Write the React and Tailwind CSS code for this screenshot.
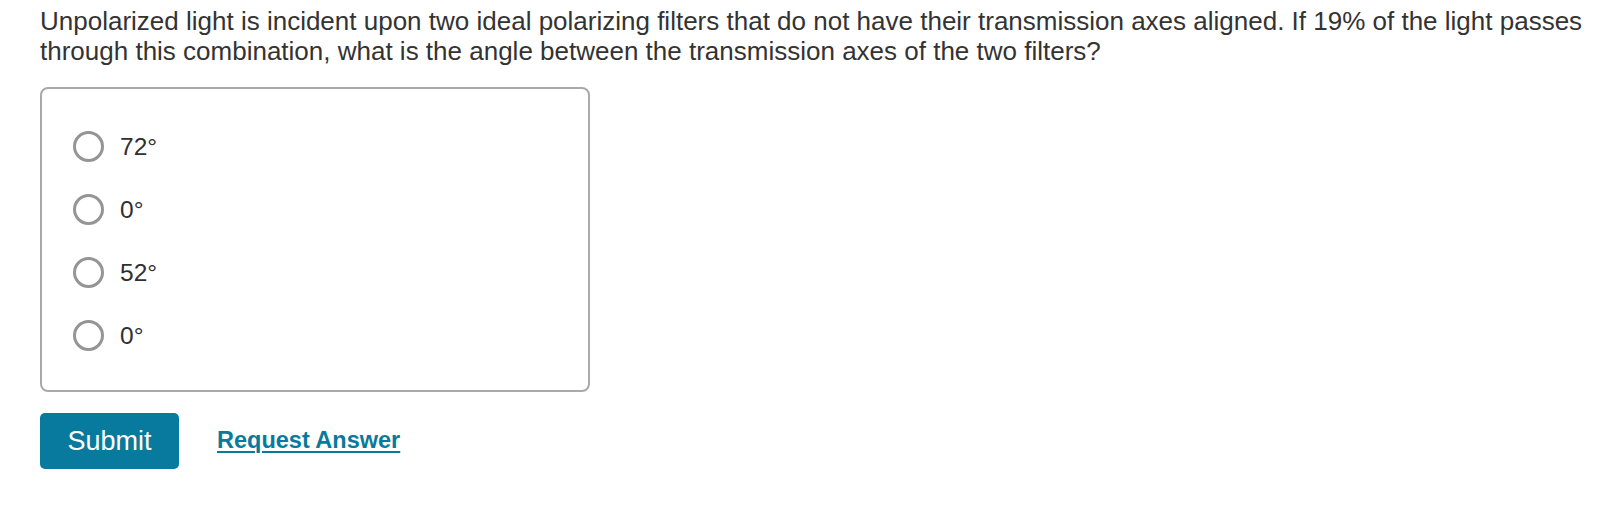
import React, { useState } from 'react';

const options = ['72°', '0°', '52°', '0°'];

const RadioOption = ({ label, checked, onSelect }) => (
  <label className="flex h-[63px] cursor-pointer items-center gap-[16px]" onClick={onSelect}>
    <span className="flex h-[31px] w-[31px] shrink-0 items-center justify-center rounded-full border-[3px] border-[#959595] bg-white">
      {checked && <span className="h-[14px] w-[14px] rounded-full bg-[#077a9e]" />}
    </span>
    <span className="text-[24.5px] leading-[30px] text-[#2f2f2f]">{label}</span>
  </label>
);

const App = () => {
  const [selected, setSelected] = useState(null);

  return (
    <div className="min-h-screen w-full bg-white pl-[40px] pr-[16px] pt-[6px] font-['Liberation_Sans',Arial,sans-serif] text-[#333333]">
      <p className="text-[26px] leading-[30px]">
        Unpolarized light is incident upon two ideal polarizing filters that do not have their transmission axes aligned. If 19% of the light passes through this combination, what is the angle between the transmission axes of the two filters?
      </p>

      <div className="mt-[21px] w-[550px] rounded-[8px] border-2 border-[#a9a9a9] pb-[23px] pl-[31px] pr-[31px] pt-[26px]">
        {options.map((opt, i) => (
          <RadioOption key={i} label={opt} checked={selected === i} onSelect={() => setSelected(i)} />
        ))}
      </div>

      <div className="mt-[21px] flex items-center gap-[38px]">
        <button className="h-[56px] w-[139px] rounded-[5px] bg-[#077a9e] text-[27px] text-white">
          Submit
        </button>
        <a href="#" className="text-[23.5px] font-bold text-[#0a7a9c] underline decoration-2 underline-offset-[3px]">
          Request Answer
        </a>
      </div>
    </div>
  );
};

export default App;
